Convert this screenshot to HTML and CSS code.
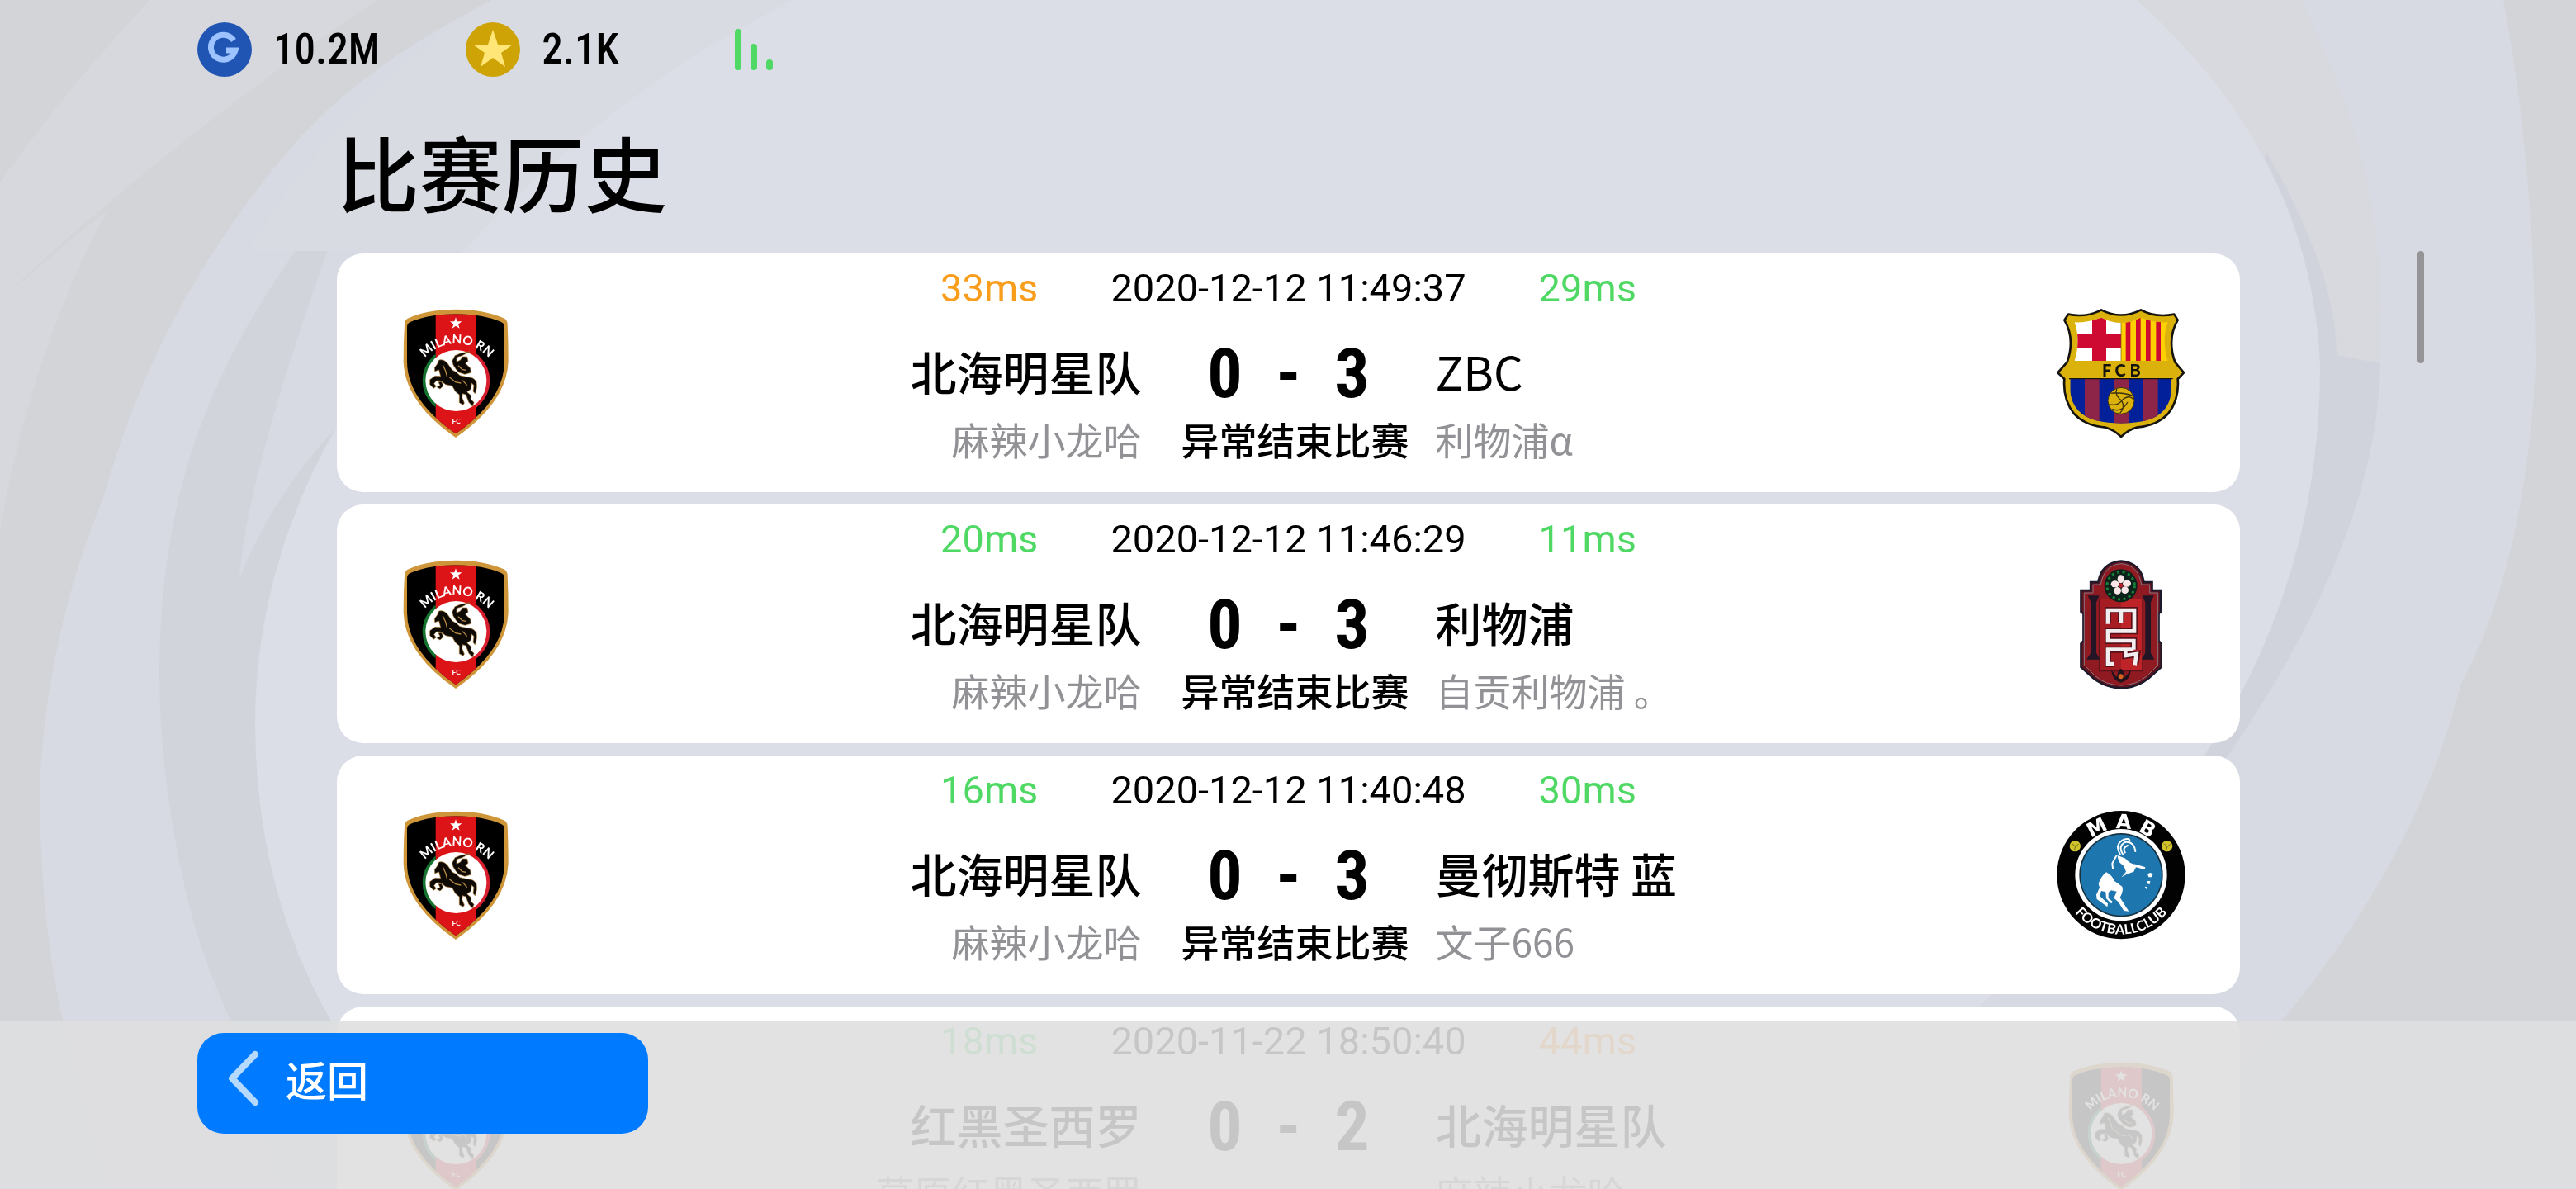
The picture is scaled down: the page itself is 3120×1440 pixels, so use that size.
FILE: index.html
```html
<!DOCTYPE html>
<html lang="zh-CN">
<head>
  <meta charset="UTF-8" />
  <title>比赛历史</title>
  <link rel="stylesheet" href="styles.css">
</head>
<body>

<!-- Background swirl -->
<svg class="backdrop" viewBox="0 0 3120 1440" preserveAspectRatio="none" aria-hidden="true">
  <rect width="3120" height="1440" fill="#d3d4d8"/>
  <path d="M182 0L456 0Q180 190 0 364V221Q90 95 182 0Z" fill="#d7d8de"/>
  <path d="M0 364Q60 310 130 255Q40 420 0 640Z" fill="#d6d8de"/>
  <path d="M596 0Q430 85 350 182Q190 370 126 600Q60 760 49 933Q45 1100 77 1240L130 1440H2560Q2900 1150 2980 830Q3060 680 3071 443Q3070 200 3032 0Z" fill="#d7dae2"/>
  <path d="M430 213Q250 420 210 633Q170 838 224 1075Q240 1150 281 1240L340 1440H520L403 1240Q250 860 407 518Q330 600 290 700Q300 560 430 213Z" fill="#d2d4db"/>
  <path d="M2588 0H2786Q2880 180 2883 364Q2885 650 2700 913L2399 1218L2671 913Z" fill="#d8d9de"/>
  <path d="M2744 182Q2830 330 2830 430L2883 440Q2880 650 2700 913Q2550 1100 2399 1218L2300 1250L2671 913Z" fill="#d1d3dc"/>
  <path d="M961 0Q740 110 561 304Q440 430 407 518Q309 690 309 878Q310 1080 403 1240L520 1440H2200Q2330 1280 2399 1218Q2590 1050 2671 913Q2810 700 2810 443Q2800 190 2588 0Z" fill="#dcdee7"/>
  <path d="M596 0H961Q740 110 561 304H300Q420 110 596 0Z" fill="#d9dbe3"/>
</svg>

<!-- Club crests -->
<svg class="sprites" aria-hidden="true">
  <defs>
    <clipPath id="milano-shield">
      <path d="M275 89Q375 90 440 118Q452 122 452 137V262Q452 400 275 524Q98 400 98 262V137Q98 122 110 118Q175 90 275 89Z"/>
    </clipPath>
    <clipPath id="milano-left"><rect x="150" y="200" width="52" height="260"/></clipPath>
    <clipPath id="milano-right"><rect x="350" y="200" width="60" height="260"/></clipPath>
    <path id="milano-arc" d="M146 272Q190 200 277 196Q365 200 413 272"/>
    <symbol id="crest-milano" viewBox="41 70 468 468">
      <path d="M275 72Q380 73 447 103Q462 108 463 125Q466 190 466 262Q460 410 275 538Q90 410 85 262Q85 190 89 125Q90 108 105 103Q170 73 275 72Z" fill="#cf9639"/>
      <g clip-path="url(#milano-shield)">
        <rect x="80" y="80" width="390" height="450" fill="#000"/>
        <rect x="202" y="80" width="148" height="450" fill="#dc1418"/>
      </g>
      <circle cx="275" cy="331" r="121" fill="#15722f" clip-path="url(#milano-left)"/>
      <circle cx="278" cy="331" r="121" fill="#d81f30" clip-path="url(#milano-right)"/>
      <circle cx="276" cy="331" r="111" fill="#fff"/>
      <path d="M275 101L280 116H297L284 126L289 141L275 132L262 141L267 126L254 116H270Z" fill="#fff"/>
      <text class="milano-name"><textPath href="#milano-arc" startOffset="50%" text-anchor="middle">MILANO RN</textPath></text>
      <text class="milano-fc" x="277" y="488" text-anchor="middle">FC</text>
      <!-- horse and rider -->
      <g fill="#0d0a05" stroke="#a8742c" stroke-width="2">
        <path d="M214 256Q232 252 245 268L262 292L277 300L290 312L318 318Q342 318 350 336Q354 358 345 378L338 370L341 348L333 340L330 362L316 372L332 386L329 398L341 410L336 424L322 409L312 382L300 378L298 392L306 412L302 419L288 411V382L274 371L262 350L238 345L221 332L205 331L196 342L204 352L194 359L181 345V327L200 314L220 315L214 292L199 297L198 284L208 270Z"/>
        <path d="M266 274L262 260L272 240L292 232L326 225L298 240L278 246L278 263L292 256L299 244L316 244L320 260L310 268L328 286L330 302L308 308L286 301L276 290Z"/>
        <path d="M223 334L230 350L218 361L206 354L218 348L212 336Z"/>
      </g>
      <path d="M228 274L238 296L244 318M284 276L298 290L312 293M252 318L274 336L294 340M300 330L316 348" fill="none" stroke="#b98a45" stroke-width="4"/>
    </symbol>

    <clipPath id="fcb-base">
      <path d="M109 326H477V370Q470 440 410 468Q370 486 294 487Q218 486 178 468Q116 440 109 370Z"/>
    </clipPath>
    <clipPath id="fcb-top">
      <path d="M125 120Q170 122 222 103Q260 122 294 122Q330 122 366 103Q410 122 464 120Q440 185 464 260H125Q148 185 125 120Z"/>
    </clipPath>
    <symbol id="crest-fcb" viewBox="60 71 468 468">
      <path d="M102 91Q170 104 222 75Q294 112 366 75Q418 104 487 91L500 112Q460 180 490 265L522 303L500 326Q506 400 465 452Q425 496 350 502Q320 510 294 536Q268 510 238 502Q163 496 123 452Q82 400 88 326L64 303L98 265Q128 180 88 112Z" fill="#dbb20b" stroke="#15130d" stroke-width="8" stroke-linejoin="round"/>
      <g clip-path="url(#fcb-top)">
        <rect x="110" y="95" width="184" height="170" fill="#fff"/>
        <path d="M189 95H240V265H189ZM110 162H294V213H110Z" fill="#cf0a32"/>
        <rect x="294" y="95" width="180" height="170" fill="#ffd000"/>
        <path d="M311 95H328V265H311ZM348 95H365V265H348ZM384 95H401V265H384ZM421 95H438V265H421Z" fill="#cf0a32"/>
        <path d="M294 95V265" stroke="#6c5a18" stroke-width="2"/>
      </g>
      <g clip-path="url(#fcb-base)">
        <rect x="100" y="320" width="390" height="180" fill="#03209b"/>
        <path d="M162 320H215V500H162ZM269 320H322V500H269ZM375 320H428V500H375Z" fill="#8c2547"/>
      </g>
      <path d="M105 325H482" stroke="#15130d" stroke-width="4"/>
      <circle cx="294" cy="405" r="48" fill="#dbb20b" stroke="#3a3010" stroke-width="3"/>
      <path d="M296 405Q270 385 278 362M296 405Q320 380 340 400M296 405Q310 430 290 450M258 378Q285 372 335 386M250 418Q280 425 296 405M262 435Q295 450 318 410" fill="none" stroke="#3a3010" stroke-width="4"/>
      <text class="fcb-name" x="295" y="317" text-anchor="middle">F C B</text>
    </symbol>

    <symbol id="crest-msr" viewBox="60 56 468 468">
      <path d="M294 60Q366 66 377 137H407V167H438V245L431 252V350L440 360V446L395 486Q350 522 294 522Q238 522 193 486L148 446V360L157 350V252L148 245V167H183V137H211Q222 66 294 60Z" fill="#5f141d" stroke="#1b1a2c" stroke-width="7"/>
      <path d="M294 70Q356 74 368 146H398V176H428V438L388 478Q350 511 294 512Q238 511 200 478L160 438V176H192V146H220Q232 74 294 70Z" fill="#8f1a21" stroke="#8d7580" stroke-width="3"/>
      <path d="M215 200H294V460H215Z" fill="#a51c22"/>
      <path d="M294 200H372V460H294Z" fill="#bd2327"/>
      <path d="M215 200V460H372V200" fill="none" stroke="#5a121d" stroke-width="4"/>
      <path d="M176 188H212L202 210V395L214 416H172L186 395V210ZM374 188H410L400 210V395L412 416H372L384 395V210Z" fill="#221526" stroke="#221526" stroke-width="4"/>
      <circle cx="293" cy="150" r="60" fill="#0c2119"/>
      <circle cx="293" cy="150" r="50" fill="none" stroke="#16823a" stroke-width="9" stroke-dasharray="9 11"/>
      <g fill="#fbe6e8">
        <ellipse cx="293" cy="126" rx="12" ry="15"/>
        <ellipse cx="315" cy="142" rx="15" ry="12"/>
        <ellipse cx="308" cy="166" rx="13" ry="13"/>
        <ellipse cx="281" cy="168" rx="13" ry="13"/>
        <ellipse cx="272" cy="144" rx="15" ry="12"/>
      </g>
      <circle cx="293" cy="149" r="8" fill="#b3202b"/>
      <g fill="none">
        <path d="M246 287V239H342V315H246V350H340V382M294 239V282M266 434H246V382H340M310 382V404L352 398L346 434" stroke="#571019" stroke-width="24"/>
        <path d="M246 289V239H342V315H246V350H340V382M294 239V284M268 434H246V382H340M310 382V404L350 398L344 438" stroke="#f2eef0" stroke-width="14"/>
      </g>
      <path d="M258 456Q262 495 293 502Q326 495 330 456L308 482L302 462Q293 440 284 462L278 482Z" fill="#21131c"/>
      <circle cx="293" cy="480" r="9" fill="#d9611f"/>
    </symbol>

    <path id="mab-top" d="M124 276A173 173 0 0 1 464 276"/>
    <path id="mab-bottom" d="M83 350A216 216 0 0 0 505 350"/>
    <symbol id="crest-mab" viewBox="60 71 468 468">
      <circle cx="294" cy="304" r="233" fill="#020202"/>
      <circle cx="294" cy="304" r="167" fill="#fff"/>
      <circle cx="294" cy="304" r="152" fill="#16313f"/>
      <circle cx="294" cy="304" r="147" fill="#1e76ae"/>
      <circle cx="127" cy="199" r="20" fill="#cfc22b"/>
      <circle cx="461" cy="199" r="20" fill="#cfc22b"/>
      <path d="M115 190L128 200L140 192M128 200L124 214M449 190L462 200L474 192M462 200L458 214" fill="none" stroke="#77701b" stroke-width="3"/>
      <text class="mab-name"><textPath href="#mab-top" startOffset="50%" text-anchor="middle">M A B</textPath></text>
      <text class="mab-club"><textPath href="#mab-bottom" startOffset="50%" text-anchor="middle">FOOTBALLCLUB</textPath></text>
      <!-- rearing goat -->
      <g fill="#fff">
        <path d="M280 232L310 244Q322 262 350 266L382 276L380 284L348 276L340 292L318 300L296 312L312 292L304 272L286 256Z"/>
        <path d="M240 294Q260 304 270 326L298 346Q304 362 290 386L304 408L322 436L304 434L284 402L268 388L278 364L258 360L248 368V388L264 402L258 408L240 390L238 366L222 362L216 380L246 408L244 420L206 392L204 376L216 350L212 336Q220 310 240 294Z"/>
      </g>
      <path d="M290 228Q270 195 300 177Q325 168 325 180M300 228Q282 200 308 185Q340 180 346 218M308 222Q298 205 318 197M276 236L262 262L264 280M312 268L330 290M300 250L325 270" fill="none" stroke="#fff" stroke-width="6" stroke-linecap="round"/>
      <path d="M390 300L400 296L410 300L406 312L394 312ZM390 326L400 326L398 338L390 336ZM380 346L390 348L386 356Z" fill="#fff"/>
    </symbol>
  </defs>
</svg>

<main class="screen">
  <header class="topbar">
    <div class="currency">
      <svg class="coin" viewBox="0 0 66 66" aria-hidden="true">
        <circle cx="33" cy="33" r="33" fill="#2055b4"/>
        <path d="M44 22A15 15 0 1 0 46 34H35" fill="none" stroke="#9cc3ff" stroke-width="7"/>
      </svg>
      <span>10.2M</span>
    </div>
    <div class="currency">
      <svg class="coin" viewBox="0 0 66 66" aria-hidden="true">
        <circle cx="33" cy="33" r="33" fill="#cda306"/>
        <path d="M33 9L39 27H57L43 37L48 54L33 43L18 54L23 37L9 27H27Z" fill="#ffe676"/>
      </svg>
      <span>2.1K</span>
    </div>
    <svg class="signal" viewBox="0 0 46 50" aria-label="信号">
      <path d="M4 4V46M23 22V46M42 41V46" fill="none" stroke="#4fd964" stroke-width="8" stroke-linecap="round"/>
    </svg>
  </header>

  <h1>比赛历史</h1>

  <ul class="matches">
    <li class="match">
      <svg class="crest"><use href="#crest-milano"/></svg>
      <div class="info">
        <div class="meta"><span class="ping slow">33ms</span><time>2020-12-12 11:49:37</time><span class="ping">29ms</span></div>
        <div class="teams"><span class="home">北海明星队</span><span class="score"><b>0</b><b>-</b><b>3</b></span><span class="away latin">ZBC</span></div>
        <div class="players"><span class="home">麻辣小龙哈</span><span class="status">异常结束比赛</span><span class="away">利物浦α</span></div>
      </div>
      <svg class="crest"><use href="#crest-fcb"/></svg>
    </li>
    <li class="match">
      <svg class="crest"><use href="#crest-milano"/></svg>
      <div class="info">
        <div class="meta"><span class="ping">20ms</span><time>2020-12-12 11:46:29</time><span class="ping">11ms</span></div>
        <div class="teams"><span class="home">北海明星队</span><span class="score"><b>0</b><b>-</b><b>3</b></span><span class="away">利物浦</span></div>
        <div class="players"><span class="home">麻辣小龙哈</span><span class="status">异常结束比赛</span><span class="away">自贡利物浦 。</span></div>
      </div>
      <svg class="crest"><use href="#crest-msr"/></svg>
    </li>
    <li class="match">
      <svg class="crest"><use href="#crest-milano"/></svg>
      <div class="info">
        <div class="meta"><span class="ping">16ms</span><time>2020-12-12 11:40:48</time><span class="ping">30ms</span></div>
        <div class="teams"><span class="home">北海明星队</span><span class="score"><b>0</b><b>-</b><b>3</b></span><span class="away">曼彻斯特 蓝</span></div>
        <div class="players"><span class="home">麻辣小龙哈</span><span class="status">异常结束比赛</span><span class="away">文子666</span></div>
      </div>
      <svg class="crest"><use href="#crest-mab"/></svg>
    </li>
    <li class="match">
      <svg class="crest"><use href="#crest-milano"/></svg>
      <div class="info">
        <div class="meta"><span class="ping">18ms</span><time>2020-11-22 18:50:40</time><span class="ping slow">44ms</span></div>
        <div class="teams"><span class="home">红黑圣西罗</span><span class="score"><b>0</b><b>-</b><b>2</b></span><span class="away">北海明星队</span></div>
        <div class="players"><span class="home">草原红黑圣西罗</span><span class="status"></span><span class="away">麻辣小龙哈</span></div>
      </div>
      <svg class="crest"><use href="#crest-milano"/></svg>
    </li>
  </ul>
</main>

<div class="scroll-thumb"></div>

<footer class="bottombar">
  <button class="back" type="button">
    <svg viewBox="0 0 38 68" aria-hidden="true">
      <path d="M33 5L5 34L33 63" fill="none" stroke="#b5d9ff" stroke-width="8" stroke-linecap="round" stroke-linejoin="round"/>
    </svg>
    返回
  </button>
</footer>

</body>
</html>
```
FILE: styles.css
```css
* { box-sizing: border-box; }
html { background-color: #dcdee7; }
body, html {
  margin: 0;
  padding: 0;
  height: 100%;
  overflow: hidden;
  font-family: "Noto Sans CJK SC", sans-serif;
  color: #000;
}
.backdrop {
  position: fixed;
  top: 0; left: 0;
  width: 100%;
  height: 100%;
  z-index: -1;
}
.sprites {
  position: absolute;
  width: 0;
  height: 0;
}
.screen {
  padding: 0 407px 0 408px;
}

/* currencies */
.topbar {
  display: flex;
  align-items: center;
  gap: 104px;
  height: 119px;
  margin-left: -169px;
}
.currency {
  display: flex;
  align-items: center;
  gap: 26px;
  font-family: "Roboto Condensed", Roboto, sans-serif;
  font-size: 51px;
  font-weight: 500;
  line-height: 66px;
}
.coin { width: 66px; height: 66px; }
.signal {
  width: 46px;
  height: 50px;
  margin-left: 36px;
}
h1 {
  margin: 0 0 12px;
  font-size: 100px;
  font-weight: 500;
  line-height: 176px;
}

/* match list */
.matches {
  display: flex;
  flex-direction: column;
  gap: 15px;
  margin: 0;
  padding: 0;
  list-style: none;
}
.match {
  display: flex;
  align-items: center;
  padding: 14px 66px 41px;
  border-radius: 32px;
  background: #fff;
}
.crest {
  flex: none;
  width: 156px;
  height: 156px;
  margin-top: 27px;
}
.info { flex: 1; }
.meta {
  display: flex;
  justify-content: center;
  gap: 88px;
  margin-bottom: 22px;
  font-family: Roboto, sans-serif;
  font-size: 47px;
  line-height: 56px;
}
.ping { color: #4fd964; }
.ping.slow { color: #f99d1c; }
.teams, .players {
  display: grid;
  grid-template-columns: 1fr 356px 1fr;
}
.teams {
  font-size: 56px;
  font-weight: 500;
  line-height: 100px;
}
.teams .latin { font-weight: 400; }
.players {
  color: #929296;
  font-size: 46px;
  line-height: 48px;
}
.home { text-align: right; }
.score {
  display: flex;
  justify-content: center;
  font-family: "Roboto Condensed", Roboto, sans-serif;
  font-size: 84px;
  line-height: 108px;
}
.score b {
  width: 77px;
  text-align: center;
}
.status {
  padding-right: 32px;
  color: #000;
  font-weight: 500;
  text-align: right;
}

.scroll-thumb {
  position: fixed;
  top: 304px;
  right: 184px;
  width: 8px;
  height: 136px;
  border-radius: 4px;
  background: #959597;
}

/* back button */
.bottombar {
  position: fixed;
  left: 0; right: 0; bottom: 0;
  height: 204px;
  padding: 15px 239px;
  background: rgba(222, 222, 223, 0.89);
}
.back {
  display: flex;
  align-items: center;
  gap: 32px;
  width: 546px;
  height: 122px;
  padding: 0 0 12px 37px;
  border: none;
  border-radius: 32px;
  background: #007bff;
  color: #fff;
  font-family: inherit;
  font-size: 50px;
  font-weight: 500;
  cursor: pointer;
}
.back svg { width: 38px; height: 68px; }

/* lettering on the crests */
.milano-name {
  font: bold 46px Lato, sans-serif;
  fill: #fff;
}
.milano-fc {
  font: bold 25px Lato, sans-serif;
  fill: #fff;
}
.fcb-name {
  font: 900 60px Lato, sans-serif;
  fill: #15130d;
}
.mab-name {
  font: bold 72px "DejaVu Sans", sans-serif;
  fill: #fff;
}
.mab-club {
  font: bold 50px Lato, sans-serif;
  fill: #fff;
}
```
